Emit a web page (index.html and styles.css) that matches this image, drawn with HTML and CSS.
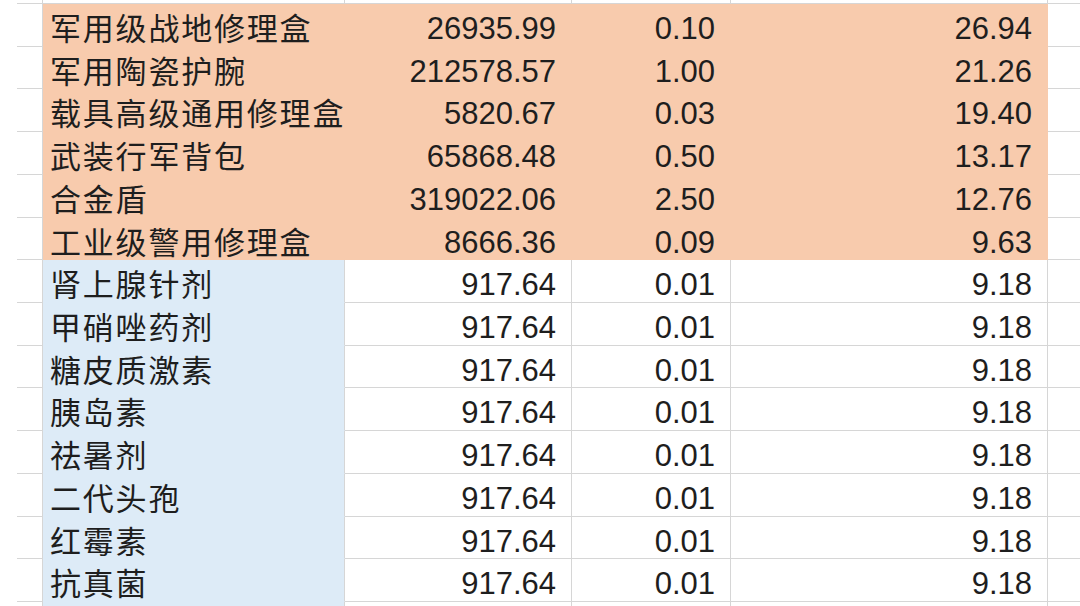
FILE: index.html
```html
<!DOCTYPE html>
<html lang="zh">
<head>
<meta charset="utf-8">
<link rel="stylesheet" href="styles.css">
</head>
<body>
<div class="sheet">
  <div class="gut"></div><div class="cell a"></div><div class="cell"></div><div class="cell"></div><div class="cell"></div><div class="cell"></div><div class="cell f"></div>

  <div class="gut"></div><div class="cell a"></div><div class="cell name o">军用级战地修理盒</div><div class="cell num o">26935.99</div><div class="cell num o">0.10</div><div class="cell num o">26.94</div><div class="cell f"></div>
  <div class="gut"></div><div class="cell a"></div><div class="cell name o">军用陶瓷护腕</div><div class="cell num o">212578.57</div><div class="cell num o">1.00</div><div class="cell num o">21.26</div><div class="cell f"></div>
  <div class="gut"></div><div class="cell a"></div><div class="cell name o">载具高级通用修理盒</div><div class="cell num o">5820.67</div><div class="cell num o">0.03</div><div class="cell num o">19.40</div><div class="cell f"></div>
  <div class="gut"></div><div class="cell a"></div><div class="cell name o">武装行军背包</div><div class="cell num o">65868.48</div><div class="cell num o">0.50</div><div class="cell num o">13.17</div><div class="cell f"></div>
  <div class="gut"></div><div class="cell a"></div><div class="cell name o">合金盾</div><div class="cell num o">319022.06</div><div class="cell num o">2.50</div><div class="cell num o">12.76</div><div class="cell f"></div>
  <div class="gut"></div><div class="cell a"></div><div class="cell name o">工业级警用修理盒</div><div class="cell num o">8666.36</div><div class="cell num o">0.09</div><div class="cell num o">9.63</div><div class="cell f"></div>

  <div class="gut"></div><div class="cell a"></div><div class="cell name b">肾上腺针剂</div><div class="cell num">917.64</div><div class="cell num">0.01</div><div class="cell num">9.18</div><div class="cell f"></div>
  <div class="gut"></div><div class="cell a"></div><div class="cell name b">甲硝唑药剂</div><div class="cell num">917.64</div><div class="cell num">0.01</div><div class="cell num">9.18</div><div class="cell f"></div>
  <div class="gut"></div><div class="cell a"></div><div class="cell name b">糖皮质激素</div><div class="cell num">917.64</div><div class="cell num">0.01</div><div class="cell num">9.18</div><div class="cell f"></div>
  <div class="gut"></div><div class="cell a"></div><div class="cell name b">胰岛素</div><div class="cell num">917.64</div><div class="cell num">0.01</div><div class="cell num">9.18</div><div class="cell f"></div>
  <div class="gut"></div><div class="cell a"></div><div class="cell name b">祛暑剂</div><div class="cell num">917.64</div><div class="cell num">0.01</div><div class="cell num">9.18</div><div class="cell f"></div>
  <div class="gut"></div><div class="cell a"></div><div class="cell name b">二代头孢</div><div class="cell num">917.64</div><div class="cell num">0.01</div><div class="cell num">9.18</div><div class="cell f"></div>
  <div class="gut"></div><div class="cell a"></div><div class="cell name b">红霉素</div><div class="cell num">917.64</div><div class="cell num">0.01</div><div class="cell num">9.18</div><div class="cell f"></div>
  <div class="gut"></div><div class="cell a"></div><div class="cell name b">抗真菌</div><div class="cell num">917.64</div><div class="cell num">0.01</div><div class="cell num">9.18</div><div class="cell f"></div>

  <div class="gut"></div><div class="cell a"></div><div class="cell name b"></div><div class="cell"></div><div class="cell"></div><div class="cell"></div><div class="cell f"></div>
</div>
</body>
</html>
```

FILE: styles.css
```css
html, body {
  margin: 0;
  padding: 0;
  background: #ffffff;
}

.sheet {
  display: grid;
  grid-template-columns: 17px 26px 302px 227px 159px 317px 1fr;
  grid-template-rows: 4px repeat(14, 42.72px) 1fr;
  width: 1080px;
  height: 606px;
  overflow: hidden;
  color: #1e1e1e;
}

.gut {
  background: #ffffff;
}

.cell {
  box-sizing: border-box;
  border-right: 1px solid #d6d6d6;
  border-bottom: 1px solid #d6d6d6;
  background: #ffffff;
  white-space: nowrap;
  line-height: 36px;
  min-width: 0;
}

.cell.f {
  border-right: none;
}

.name {
  font-family: "Noto Sans CJK SC", "Noto Sans", sans-serif;
  font-size: 31px;
  letter-spacing: 1.8px;
  padding-left: 7px;
  padding-top: 5px;
}

.num {
  font-family: "Liberation Sans", Arial, sans-serif;
  font-size: 31px;
  text-align: right;
  padding-right: 15px;
  padding-top: 7px;
}

.o {
  background: #f8cbad;
  border-right-color: #f8cbad;
  border-bottom-color: #f8cbad;
}

.b {
  background: #ddebf7;
  border-bottom-color: #ddebf7;
}
```
